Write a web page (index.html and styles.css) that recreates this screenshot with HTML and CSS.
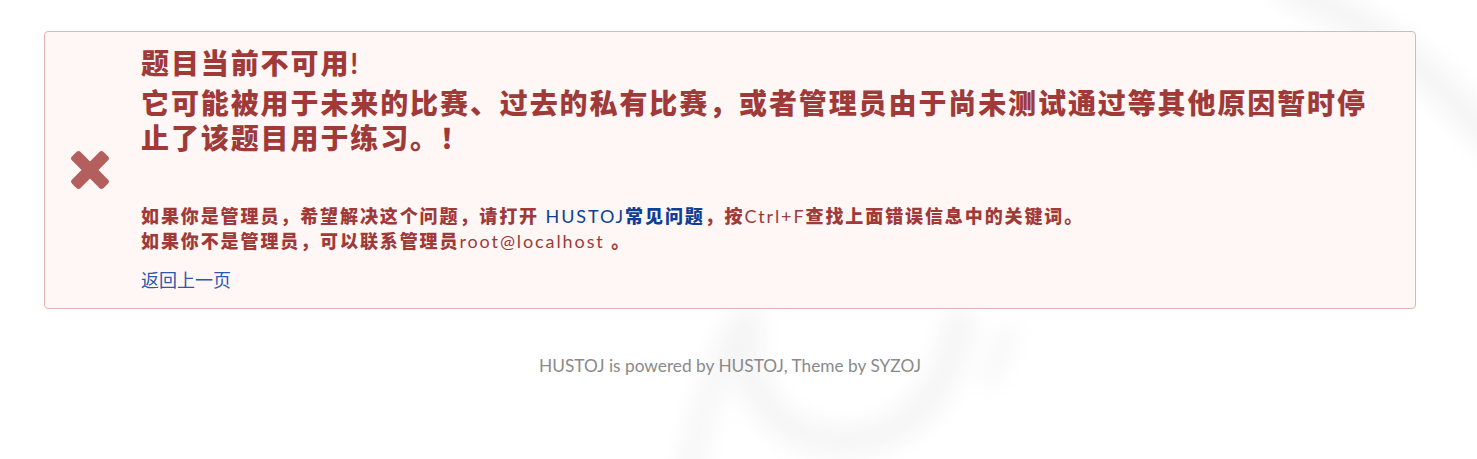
FILE: index.html
```html
<!DOCTYPE html>
<html lang="zh-CN">
<head>
<meta charset="utf-8">
<title>题目当前不可用</title>
<link rel="stylesheet" href="styles.css">
</head>
<body>
<svg class="watermark" width="1477" height="459" viewBox="0 0 1477 459" aria-hidden="true">
  <defs><filter id="blur"><feGaussianBlur stdDeviation="12"/></filter></defs>
  <g filter="url(#blur)" fill="none" stroke="#f4f4f4" stroke-linecap="round">
    <path d="M1290 -10 Q1400 30 1490 140" stroke-width="30"/>
    <path d="M748 318 C735 400 790 450 860 440 C920 430 950 380 960 320" stroke-width="28"/>
    <path d="M690 470 C700 420 715 370 735 330" stroke-width="20"/>
    <path d="M1010 330 L990 380" stroke-width="14"/>
  </g>
</svg>
<div class="page">
  <div class="message">
    <svg class="icon" width="40" height="40" viewBox="0 0 40 40" aria-hidden="true">
      <g transform="translate(20 20) rotate(45)">
        <rect x="-22.3" y="-6" width="44.6" height="12" rx="3"/>
        <rect x="-6" y="-22.3" width="12" height="44.6" rx="3"/>
      </g>
    </svg>
    <div class="content">
      <div class="header">
        <div class="title">题目当前不可用<span class="bang">!</span></div>
        <div class="reason">它可能被用于未来的比赛、过去的私有比赛，或者管理员由于尚未测试通过等其他原因暂时停止了该题目用于练习。！</div>
      </div>
      <div class="help">
        <div>如果你是管理员，希望解决这个问题，请打开<span class="latin"> </span><a class="faq" href="#"><span class="latin">HUSTOJ</span>常见问题</a>，按<span class="latin">Ctrl+F</span>查找上面错误信息中的关键词。</div>
        <div>如果你不是管理员，可以联系管理员<span class="latin">root@localhost </span>。</div>
      </div>
      <a class="back" href="#">返回上一页</a>
    </div>
  </div>
  <div class="footer">HUSTOJ is powered by HUSTOJ, Theme by SYZOJ</div>
</div>
</body>
</html>
```
FILE: styles.css
```css
html, body {
  margin: 0;
  padding: 0;
  background: #ffffff;
}

body {
  position: relative;
  min-height: 459px;
  font-family: "Lato", "Noto Sans CJK SC", sans-serif;
  font-size: 14px;
  color: rgba(0, 0, 0, 0.87);
  overflow: hidden;
}

.watermark {
  position: absolute;
  left: 0;
  top: 0;
  z-index: 0;
  pointer-events: none;
}

.page {
  position: relative;
  z-index: 1;
  padding: 31px 61px 0 44px;
}

.message {
  display: flex;
  align-items: center;
  background: #fff6f6;
  border: 1px solid #e0b4b4;
  border-radius: 4px;
  color: #9f3a38;
  padding: 14px 21px 15px 25px;
}

.icon {
  flex: none;
  fill: #9f3a38;
  opacity: 0.8;
  margin-right: 31px;
}

.content {
  flex: 1;
  min-width: 0;
}

.header {
  font-size: 28px;
  font-weight: 900;
  line-height: 35px;
  letter-spacing: 1.9px;
}

.title {
  margin-bottom: 5px;
}

.bang {
  font-weight: 700;
}

.help {
  margin-top: 48px;
  font-size: 18px;
  font-weight: 900;
  line-height: 25px;
  letter-spacing: 1.9px;
}

.latin {
  font-weight: 400;
}

.faq {
  color: #0e3f95;
  text-decoration: none;
}

.back {
  display: inline-block;
  margin-top: 14px;
  font-size: 18px;
  line-height: 25px;
  color: #2b59ab;
  text-decoration: none;
}

.footer {
  margin-top: 46px;
  text-align: center;
  font-size: 17.3px;
  line-height: 22px;
  color: #8a8a8a;
}
```
